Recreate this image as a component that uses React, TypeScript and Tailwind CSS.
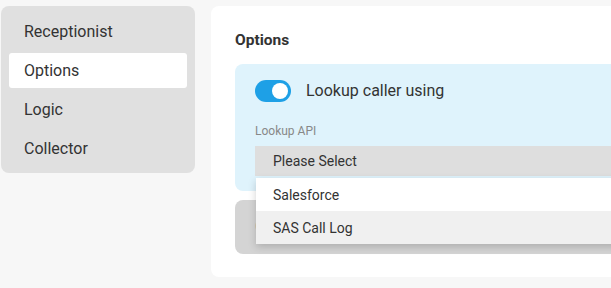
import React from "react";

const menu = ["Receptionist", "Options", "Logic", "Collector"];

export default function App() {
  return (
    <div
      className="flex h-[288px] w-[611px] overflow-hidden bg-[#f7f7f7] pl-px pt-[6px] text-[#333]"
      style={{ fontFamily: "Roboto, 'Open Sans', sans-serif" }}
    >
      <nav className="flex h-[167px] w-[194px] shrink-0 flex-col gap-1 rounded-lg bg-[#e0e0e0] px-2 pt-2">
        {menu.map((item) => (
          <div
            key={item}
            className={
              "flex h-[35px] items-center rounded-[3px] px-[15px] text-base " +
              (item === "Options" ? "bg-white" : "")
            }
          >
            {item}
          </div>
        ))}
      </nav>

      <main className="ml-4 h-[271px] w-[420px] shrink-0 rounded-lg bg-white pl-6 pt-6">
        <h2 className="text-[15.5px] font-bold leading-5">Options</h2>

        <div className="relative mt-[14px]">
          <div className="rounded-l-lg bg-[#dff3fc] pb-[15px] pl-5 pt-4">
            <div className="flex h-[22px] items-center gap-[15px]">
              <div className="flex h-[22px] w-[36px] items-center justify-end rounded-full bg-[#1ea0e6] pr-[3px]">
                <div className="h-4 w-4 rounded-full bg-white" />
              </div>
              <span className="text-base">Lookup caller using</span>
            </div>
            <div className="mt-[21px] text-xs leading-4 text-[#888]">Lookup API</div>
            <div className="mt-[7px] flex h-[30px] items-center bg-[#dedede] px-[18px] text-sm">
              Please Select
            </div>
          </div>

          {/* section mostly covered by the open dropdown */}
          <div className="mt-[9px] flex h-[54px] items-center rounded-l-lg bg-[#d4d4d4] pl-5 text-base text-[#8a8a8a]">
            Caller ID
          </div>

          <div className="absolute left-[21px] right-0 top-[114px] bg-white text-sm shadow-[0_3px_8px_rgba(0,0,0,0.18)]">
            <div className="flex h-[33px] items-center px-[17px]">Salesforce</div>
            <div className="flex h-[33px] items-center bg-[#f0f0f0] px-[17px]">SAS Call Log</div>
          </div>
        </div>
      </main>
    </div>
  );
}
